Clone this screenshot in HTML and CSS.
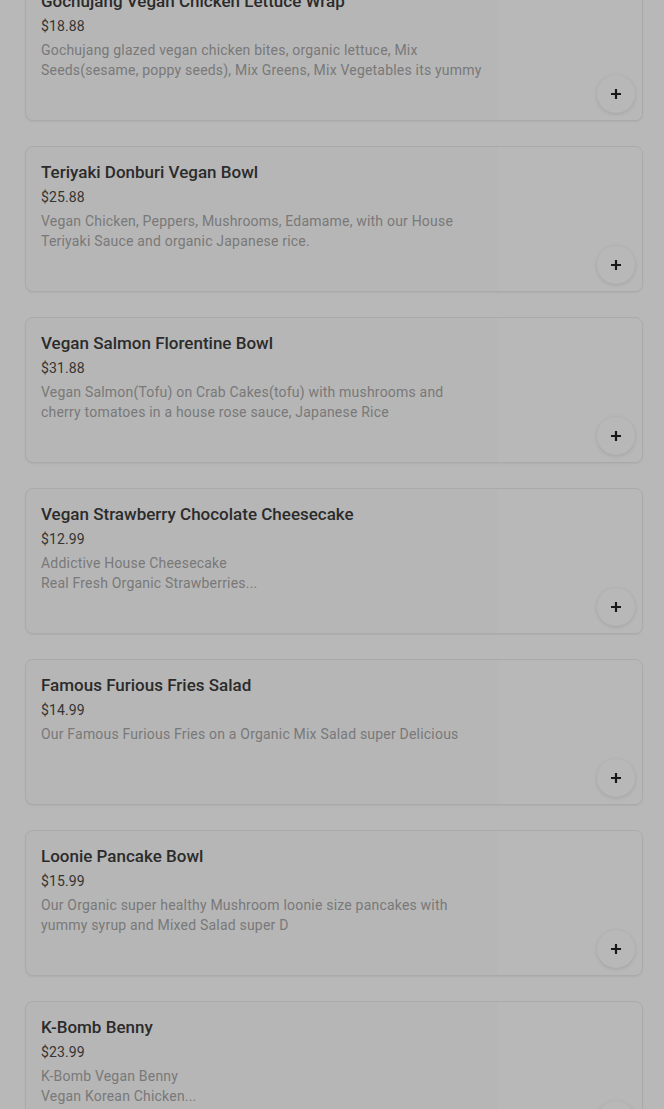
FILE: index.html
```html
<!DOCTYPE html>
<html>
<head>
<meta charset="utf-8">
<meta name="viewport" content="width=device-width, initial-scale=1.0">
<title>Menu</title>
<link rel="stylesheet" href="styles.css">
</head>
<body>
    <div class="menu">
        <div class="item">
            <div class="info">
                <h3>Gochujang Vegan Chicken Lettuce Wrap</h3>
                <p class="price">$18.88</p>
                <p class="desc">Gochujang glazed vegan chicken bites, organic lettuce, Mix Seeds(sesame, poppy seeds), Mix Greens, Mix Vegetables its yummy</p>
            </div>
            <div class="pic"></div>
            <button class="add"><svg viewBox="0 0 12 12" width="12" height="12"><path d="M6 1v10M1 6h10" stroke="#222" stroke-width="2.2"/></svg></button>
        </div>
        <div class="item">
            <div class="info">
                <h3>Teriyaki Donburi Vegan Bowl</h3>
                <p class="price">$25.88</p>
                <p class="desc">Vegan Chicken, Peppers, Mushrooms, Edamame, with our House Teriyaki Sauce and organic Japanese rice.</p>
            </div>
            <div class="pic"></div>
            <button class="add"><svg viewBox="0 0 12 12" width="12" height="12"><path d="M6 1v10M1 6h10" stroke="#222" stroke-width="2.2"/></svg></button>
        </div>
        <div class="item">
            <div class="info">
                <h3>Vegan Salmon Florentine Bowl</h3>
                <p class="price">$31.88</p>
                <p class="desc">Vegan Salmon(Tofu) on Crab Cakes(tofu) with mushrooms and cherry tomatoes in a house rose sauce, Japanese Rice</p>
            </div>
            <div class="pic"></div>
            <button class="add"><svg viewBox="0 0 12 12" width="12" height="12"><path d="M6 1v10M1 6h10" stroke="#222" stroke-width="2.2"/></svg></button>
        </div>
        <div class="item">
            <div class="info">
                <h3>Vegan Strawberry Chocolate Cheesecake</h3>
                <p class="price">$12.99</p>
                <p class="desc">Addictive House Cheesecake<br>Real Fresh Organic Strawberries...</p>
            </div>
            <div class="pic"></div>
            <button class="add"><svg viewBox="0 0 12 12" width="12" height="12"><path d="M6 1v10M1 6h10" stroke="#222" stroke-width="2.2"/></svg></button>
        </div>
        <div class="item">
            <div class="info">
                <h3>Famous Furious Fries Salad</h3>
                <p class="price">$14.99</p>
                <p class="desc">Our Famous Furious Fries on a Organic Mix Salad super Delicious</p>
            </div>
            <div class="pic"></div>
            <button class="add"><svg viewBox="0 0 12 12" width="12" height="12"><path d="M6 1v10M1 6h10" stroke="#222" stroke-width="2.2"/></svg></button>
        </div>
        <div class="item">
            <div class="info">
                <h3>Loonie Pancake Bowl</h3>
                <p class="price">$15.99</p>
                <p class="desc">Our Organic super healthy Mushroom loonie size pancakes with yummy syrup and Mixed Salad super D</p>
            </div>
            <div class="pic"></div>
            <button class="add"><svg viewBox="0 0 12 12" width="12" height="12"><path d="M6 1v10M1 6h10" stroke="#222" stroke-width="2.2"/></svg></button>
        </div>
        <div class="item">
            <div class="info">
                <h3>K-Bomb Benny</h3>
                <p class="price">$23.99</p>
                <p class="desc">K-Bomb Vegan Benny<br>Vegan Korean Chicken...</p>
            </div>
            <div class="pic"></div>
            <button class="add"><svg viewBox="0 0 12 12" width="12" height="12"><path d="M6 1v10M1 6h10" stroke="#222" stroke-width="2.2"/></svg></button>
        </div>
    </div>
    <div class="backdrop"></div>
</body>
</html>
```

FILE: styles.css
```css
*{
    font-family: Roboto, 'Noto Sans', sans-serif;
    box-sizing: border-box;
}
body{
    margin:0;
    background:#fff;
    overflow:hidden;
}
.menu{
    display:flex;
    flex-direction: column;
    gap:25px;
    margin-top:-25px;
    padding:0 21px 0 25px;
}
.item{
    position:relative;
    display:flex;
    height:146px;
    background:#fdfdfd;
    border:1px solid #ececec;
    border-radius:8px;
    box-shadow: 0 1px 2px rgba(0,0,0,0.06);
    overflow:hidden;
}
.info{
    flex:1;
    padding:14px 16px 0 15px;
}
.info h3{
    margin:0 0 4px;
    font-size:17px;
    line-height:22px;
    font-weight:500;
    color:#3c3c3c;
}
.price{
    margin:0 0 4px;
    font-size:14px;
    line-height:20px;
    letter-spacing:0.1px;
    color:#4a4a4a;
}
.desc{
    margin:0;
    max-width:445px;
    font-size:14px;
    line-height:20px;
    letter-spacing:0.2px;
    color:#a8a8a8;
}
.pic{
    width:144px;
    background:#fff;
}
.add{
    position:absolute;
    right:7px;
    bottom:7px;
    width:38px;
    height:38px;
    border:none;
    border-radius:50%;
    background:#fff;
    box-shadow: 0 1px 4px rgba(0,0,0,0.12);
    display:flex;
    justify-content:center;
    align-items:center;
    padding:0;
}
.backdrop{
    position:fixed;
    inset:0;
    background:rgba(0,0,0,0.28);
}
```
